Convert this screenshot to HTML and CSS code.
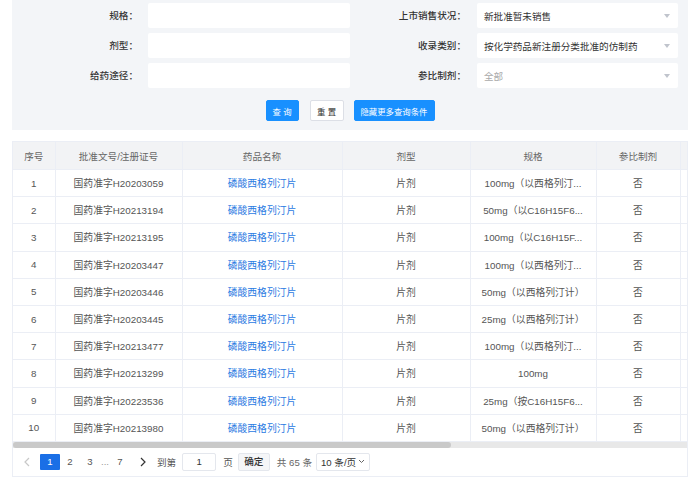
FILE: index.html
```html
<!DOCTYPE html>
<html lang="zh">
<head>
<meta charset="utf-8">
<title>药品查询</title>
<link rel="stylesheet" href="styles.css">
</head>
<body>
<div class="page">
  <div class="search-panel">
    <div class="form-grid">
      <div class="form-item"><span class="label label-a">规格：</span><div class="input"></div></div>
      <div class="form-item"><span class="label label-b">上市销售状况：</span><div class="select"><span class="val">新批准暂未销售</span><i class="arrow"></i></div></div>
      <div class="form-item"><span class="label label-a">剂型：</span><div class="input"></div></div>
      <div class="form-item"><span class="label label-b">收录类别：</span><div class="select"><span class="val">按化学药品新注册分类批准的仿制药</span><i class="arrow"></i></div></div>
      <div class="form-item"><span class="label label-a">给药途径：</span><div class="input"></div></div>
      <div class="form-item"><span class="label label-b">参比制剂：</span><div class="select"><span class="val placeholder">全部</span><i class="arrow"></i></div></div>
    </div>
    <div class="btns">
      <button class="btn btn-primary btn-query">查 询</button>
      <button class="btn btn-default btn-reset">重 置</button>
      <button class="btn btn-primary btn-more">隐藏更多查询条件</button>
    </div>
  </div>

  <div class="table-card">
    <div class="table-scroll">
      <table class="grid">
        <colgroup>
          <col class="c1"><col class="c2"><col class="c3"><col class="c4"><col class="c5"><col class="c6"><col class="c7">
        </colgroup>
        <thead>
          <tr><th>序号</th><th>批准文号/注册证号</th><th>药品名称</th><th>剂型</th><th>规格</th><th>参比制剂</th><th></th></tr>
        </thead>
        <tbody>
          <tr><td>1</td><td>国药准字H20203059</td><td class="link">磷酸西格列汀片</td><td>片剂</td><td>100mg（以西格列汀...</td><td>否</td><td></td></tr>
          <tr><td>2</td><td>国药准字H20213194</td><td class="link">磷酸西格列汀片</td><td>片剂</td><td>50mg（以C16H15F6...</td><td>否</td><td></td></tr>
          <tr><td>3</td><td>国药准字H20213195</td><td class="link">磷酸西格列汀片</td><td>片剂</td><td>100mg（以C16H15F...</td><td>否</td><td></td></tr>
          <tr><td>4</td><td>国药准字H20203447</td><td class="link">磷酸西格列汀片</td><td>片剂</td><td>100mg（以西格列汀...</td><td>否</td><td></td></tr>
          <tr><td>5</td><td>国药准字H20203446</td><td class="link">磷酸西格列汀片</td><td>片剂</td><td>50mg（以西格列汀计）</td><td>否</td><td></td></tr>
          <tr><td>6</td><td>国药准字H20203445</td><td class="link">磷酸西格列汀片</td><td>片剂</td><td>25mg（以西格列汀计）</td><td>否</td><td></td></tr>
          <tr><td>7</td><td>国药准字H20213477</td><td class="link">磷酸西格列汀片</td><td>片剂</td><td>100mg（以西格列汀...</td><td>否</td><td></td></tr>
          <tr><td>8</td><td>国药准字H20213299</td><td class="link">磷酸西格列汀片</td><td>片剂</td><td>100mg</td><td>否</td><td></td></tr>
          <tr><td>9</td><td>国药准字H20223536</td><td class="link">磷酸西格列汀片</td><td>片剂</td><td>25mg（按C16H15F6...</td><td>否</td><td></td></tr>
          <tr><td>10</td><td>国药准字H20213980</td><td class="link">磷酸西格列汀片</td><td>片剂</td><td>50mg（以西格列汀计）</td><td>否</td><td></td></tr>
        </tbody>
      </table>
    </div>
    <div class="hscroll"><div class="thumb"></div></div>
    <div class="pager">
      <span class="pg-arrow prev">
        <svg width="8" height="10" viewBox="0 0 8 10"><path d="M6 1 L2 5 L6 9" fill="none" stroke="#c8c8c8" stroke-width="1.2"/></svg>
      </span>
      <span class="pg-num active">1</span>
      <span class="pg-num">2</span>
      <span class="pg-num">3</span>
      <span class="pg-dots">...</span>
      <span class="pg-num">7</span>
      <span class="pg-arrow next">
        <svg width="8" height="10" viewBox="0 0 8 10"><path d="M2 1 L6 5 L2 9" fill="none" stroke="#333" stroke-width="1.2"/></svg>
      </span>
      <span class="pg-text goto">到第</span>
      <span class="pg-input">1</span>
      <span class="pg-text page-unit">页</span>
      <span class="pg-btn">确定</span>
      <span class="pg-text total">共 65 条</span>
      <span class="pg-size"><span class="size-text">10 条/页</span><svg width="7" height="5" viewBox="0 0 7 5"><path d="M1 1 L3.5 3.5 L6 1" fill="none" stroke="#666" stroke-width="1"/></svg></span>
    </div>
  </div>
</div>
</body>
</html>
```

FILE: styles.css
```css
* { box-sizing: border-box; }
html, body { margin: 0; padding: 0; background: #fff; }
body {
  font-family: "Liberation Sans", "Noto Sans CJK SC", sans-serif;
  font-size: 9.6px;
  color: #555;
}
.page { padding: 0 12px; width: 700px; }

.search-panel {
  background: #f3f5f8;
  padding: 3px 10px 9px 0;
}
.form-grid {
  display: grid;
  grid-template-columns: 338px 328px;
  row-gap: 5px;
}
.form-item { display: flex; align-items: center; height: 25px; }
.label {
  text-align: right;
  color: #333;
  font-weight: 500;
  font-size: 9.6px;
  line-height: 25px;
  white-space: nowrap;
}
.label-a { width: 126px; margin-right: 10px; }
.label-b { width: 116px; margin-right: 11px; }
.input {
  width: 202px; height: 25px;
  background: #fff;
  border-radius: 2px;
}
.select {
  width: 201px; height: 25px;
  background: #fff;
  border-radius: 2px;
  display: flex; align-items: center;
  padding: 0 8px 0 7px;
  justify-content: space-between;
}
.val { color: #333; white-space: nowrap; }
.val.placeholder { color: #aaa; }
.arrow {
  width: 0; height: 0;
  border-left: 3.5px solid transparent;
  border-right: 3.5px solid transparent;
  border-top: 4px solid #c0c4cc;
}

.btns {
  display: flex; justify-content: center;
  margin-top: 12px;
  padding-left: 10px;
}
.btn {
  height: 21px;
  border-radius: 2px;
  font-family: "Liberation Sans", "Noto Sans CJK SC", sans-serif;
  font-size: 8.4px;
  padding: 0;
  cursor: pointer;
}
.btn-primary { background: #1890ff; border: 1px solid #1890ff; color: #fff; }
.btn-default { background: #fff; border: 1px solid #dcdfe6; color: #333; }
.btn-query { width: 33px; }
.btn-reset { width: 34px; margin-left: 11px; }
.btn-more { width: 81px; margin-left: 10px; }

.table-card {
  margin-top: 11px;
  border: 1px solid #ebeef5;
  border-top: none;
  width: 676px;
}
.table-scroll { overflow: hidden; width: 674px; }
.grid {
  border-collapse: collapse;
  table-layout: fixed;
  width: 768px;
}
.c1 { width: 42px; } .c2 { width: 127px; } .c3 { width: 160px; }
.c4 { width: 128px; } .c5 { width: 126px; } .c6 { width: 84px; } .c7 { width: 101px; }
.grid th, .grid td {
  border-right: 1px solid #ebeef5;
  border-bottom: 1px solid #ebeef5;
  text-align: center;
  white-space: nowrap;
  overflow: hidden;
  padding: 0 6px;
  font-weight: normal;
}
.grid th {
  height: 28px;
  background: #f2f3f5;
  color: #666;
  border-top: 1px solid #ebeef5;
}
.grid td { height: 27.2px; color: #555; font-size: 9.8px; }
.grid td.link { color: #2a7ae2; }

.hscroll { height: 6px; background: #e8e8e8; }
.thumb { width: 438px; height: 6px; background: #c9c9c9; border-radius: 3px; }

.pager {
  display: flex; align-items: center;
  height: 28px;
  padding-left: 6px;
  color: #555;
}
.pg-arrow { width: 16px; display: flex; justify-content: center; align-items: center; }
.prev { margin-right: 5px; }
.next { margin-left: 5px; margin-right: 6px; }
.pg-num { width: 20px; height: 16px; line-height: 16px; text-align: center; }
.pg-num.active { background: #1a6fe6; color: #fff; border-radius: 1px; }
.pg-dots { width: 10px; color: #999; text-align: center; line-height: 16px; }
.pg-text { white-space: nowrap; }
.goto { margin-right: 6px; }
.pg-input {
  width: 34px; height: 18px; line-height: 16px;
  border: 1px solid #e4e7ed; border-radius: 2px;
  text-align: center; color: #333;
}
.page-unit { margin-left: 7px; }
.pg-btn {
  width: 32px; height: 18px; line-height: 16px;
  border: 1px solid #e4e7ed; border-radius: 2px;
  background: #f5f6f8;
  text-align: center; color: #333; font-weight: 500;
  margin-left: 5px;
}
.total { color: #666; margin-left: 7px; }
.pg-size {
  display: flex; align-items: center; justify-content: space-between;
  width: 54px; flex: none;
  height: 18px; padding: 0 4px;
  border: 1px solid #e4e7ed; border-radius: 2px;
  color: #333; margin-left: 4px;
  white-space: nowrap;
}
.size-text { white-space: nowrap; }
```
